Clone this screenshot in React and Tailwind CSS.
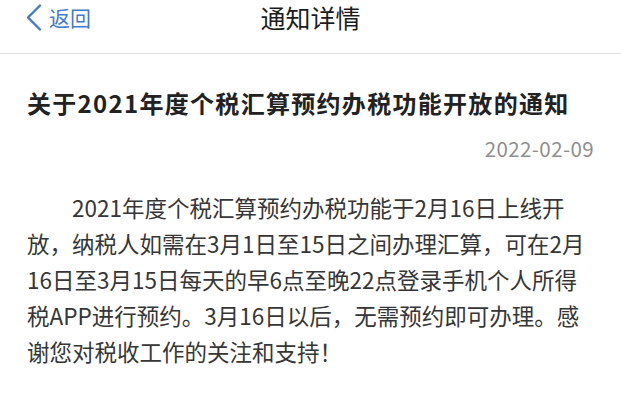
export default function App() {
  return (
    <div className="w-[621px] h-[403px] bg-white overflow-hidden font-['Noto_Sans_CJK_SC','Noto_Sans',sans-serif]">
      {/* Nav bar */}
      <div className="h-[54px] border-b border-[#e3e3e3]">
        <div className="grid grid-cols-[1fr_auto_1fr] items-center h-[34px]">
          <button className="flex items-center gap-[7px] pl-[26px] text-[#4479d0] text-[21px] leading-[30px]">
            <svg width="16" height="27" viewBox="0 0 16 27" fill="none">
              <polyline points="14,1.5 2,13.5 14,25.5" stroke="currentColor" strokeWidth="2.4" strokeLinecap="round" strokeLinejoin="round" />
            </svg>
            <span>返回</span>
          </button>
          <h1 className="text-[25px] leading-[34px] text-[#1c1c1c]">通知详情</h1>
          <div />
        </div>
      </div>

      {/* Article */}
      <div className="px-[27px]">
        <h2 className="mt-[32px] text-[24px] leading-[33px] font-semibold tracking-[1.3px] text-[#222] whitespace-nowrap">
          关于2021年度个税汇算预约办税功能开放的通知
        </h2>
        <p className="mt-[15px] text-right text-[20.5px] leading-7 tracking-[0.4px] text-[#8e8e8e]">2022-02-09</p>
        <p className="mt-[27px] text-[22.5px] leading-[36px] text-[#363636] indent-[2em]">
          2021年度个税汇算预约办税功能于2月16日上线开放，纳税人如需在3月1日至15日之间办理汇算，可在2月16日至3月15日每天的早6点至晚22点登录手机个人所得税APP进行预约。3月16日以后，无需预约即可办理。感谢您对税收工作的关注和支持！
        </p>
      </div>
    </div>
  );
}
